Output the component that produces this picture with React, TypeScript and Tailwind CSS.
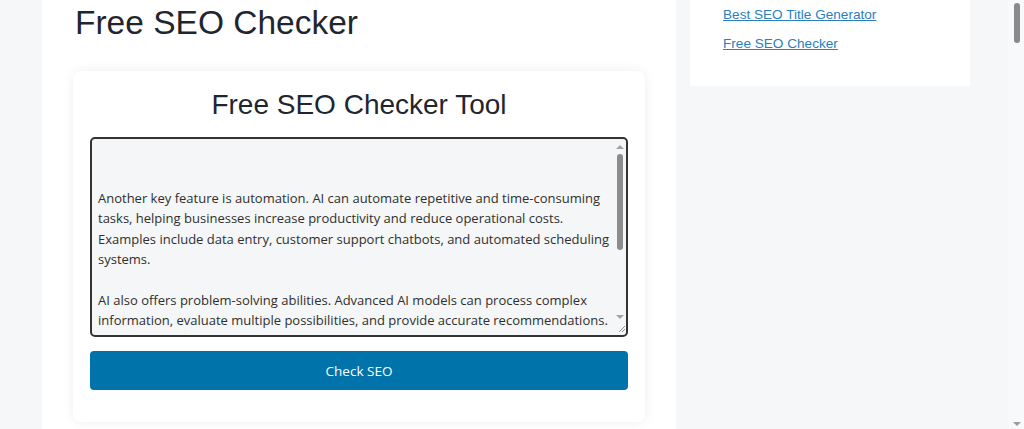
import { useState } from "react"

const sampleText = [
  "",
  "",
  "Another key feature is automation. AI can automate repetitive and time-consuming",
  "tasks, helping businesses increase productivity and reduce operational costs.",
  "Examples include data entry, customer support chatbots, and automated scheduling",
  "systems.",
  "",
  "AI also offers problem-solving abilities. Advanced AI models can process complex",
  "information, evaluate multiple possibilities, and provide accurate recommendations.",
  "This feature is highly valuable in healthcare, finance, and business planning.",
  "",
  "Finally, AI keeps learning from new data, which means its results improve over",
  "time and become more useful for every team that relies on it.",
].join("\n")

function FieldScrollbar() {
  return (
    <div className="flex w-[12px] shrink-0 flex-col items-center pt-[6px] pb-[2px]">
      <div className="h-0 w-0 border-x-[4px] border-b-[4px] border-x-transparent border-b-[#a3a3a3]" />
      <div className="mt-[5px] h-[96px] w-[6px] rounded-full bg-[#8c8c8c]" />
      <div className="flex-1" />
      <div className="h-0 w-0 border-x-[4px] border-t-[4px] border-x-transparent border-t-[#a3a3a3]" />
      <svg width="10" height="10" viewBox="0 0 10 10" className="mt-[4px] self-end">
        <path d="M9 3 L3 9 M9 6 L6 9" stroke="#8c8c8c" strokeWidth="1" />
      </svg>
    </div>
  )
}

function SeoCheckerCard() {
  const [text, setText] = useState(sampleText)

  return (
    <div className="mt-[28px] rounded-lg bg-white px-[17px] pt-[17px] pb-[32px] shadow-[0_0_12px_rgba(0,0,0,0.07)]">
      <h2 className="mb-[16px] text-center font-['Liberation_Sans',Arial,sans-serif] text-[28px] leading-[33px] text-[#1f2630]">
        Free SEO Checker Tool
      </h2>
      <div className="flex h-[200px] w-full overflow-hidden rounded-[5px] border-2 border-[#333] bg-[#f5f6f7]">
        <textarea
          autoFocus
          wrap="off"
          value={text}
          onChange={(e) => setText(e.target.value)}
          className="h-full min-w-0 flex-1 resize-none overflow-hidden bg-transparent pl-[6px] pt-[8px] font-['Open_Sans','Noto_Sans',sans-serif] text-[13px] leading-[20.4px] text-[#2f2f2f] caret-[#555] outline-none"
        />
        <FieldScrollbar />
      </div>
      <button className="mt-[14px] flex h-[39px] w-full items-center justify-center rounded-[4px] bg-[#0073aa] pt-[2px] font-['Open_Sans','Noto_Sans',sans-serif] text-[13.5px] text-white">
        Check SEO
      </button>
    </div>
  )
}

function Sidebar() {
  return (
    <aside className="h-[86px] w-[280px] shrink-0 bg-white pl-[33px] pt-[5px]">
      <ul className="flex flex-col gap-[9px] font-['Liberation_Sans',Arial,sans-serif] text-[13.6px] leading-[20px]">
        <li>
          <a href="#" className="text-[#2b7fc0] underline">
            Best SEO Title Generator
          </a>
        </li>
        <li>
          <a href="#" className="text-[#2b7fc0] underline">
            Free SEO Checker
          </a>
        </li>
      </ul>
    </aside>
  )
}

function PageScrollbar() {
  return (
    <div className="flex h-full w-[16px] shrink-0 flex-col items-center justify-between bg-[#f8f9fb] py-[3px] pl-[2px]">
      <div className="h-[40px] w-[6px] rounded-full bg-[#8a8a8a]" />
      <div className="h-0 w-0 border-x-[4px] border-t-[4px] border-x-transparent border-t-[#9a9a9a]" />
    </div>
  )
}

export default function App() {
  return (
    <div className="flex h-[429px] w-full overflow-hidden bg-[#f6f7f9]">
      <div className="flex flex-1 gap-[14px] pl-[42px]">
        <main className="h-full w-[634px] shrink-0 bg-white px-[31px]">
          <h1 className="pt-[3px] pl-[2px] font-['Liberation_Sans',Arial,sans-serif] text-[33.5px] leading-[40px] text-[#1f2630]">
            Free SEO Checker
          </h1>
          <SeoCheckerCard />
        </main>
        <Sidebar />
      </div>
      <PageScrollbar />
    </div>
  )
}
